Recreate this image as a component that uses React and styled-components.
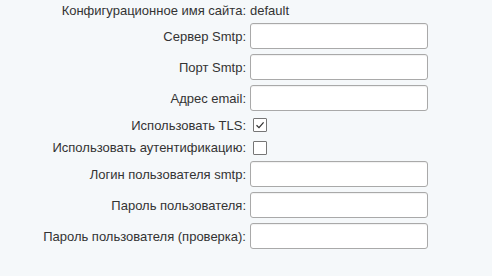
import styled, { createGlobalStyle } from "styled-components";

const GlobalStyle = createGlobalStyle`
    html, body {
        margin: 0;
        padding: 0;
        background: #f5f8fa;
    }
    body {
        font-family: "Liberation Sans", Arial, sans-serif;
        font-size: 13px;
        color: #333;
    }
`;

const Form = styled.div`
    width: 492px;
    height: 276px;
    padding-top: 2px;
    box-sizing: border-box;
    display: flex;
    flex-direction: column;
    gap: 5px;
`;

const Row = styled.div`
    display: grid;
    grid-template-columns: 246px auto;
    column-gap: 4px;
    align-items: center;
    height: ${(p) => p.$h}px;
`;

const Label = styled.label`
    text-align: right;
    white-space: nowrap;
`;

const Value = styled.span`
    color: #333;
`;

const Input = styled.input`
    box-sizing: border-box;
    width: 178px;
    height: 26px;
    margin: 0;
    border: 1px solid #a9a9a9;
    border-radius: 3px;
    background: #fff;
    box-shadow: inset 0 1px 1px rgba(0, 0, 0, 0.06);
    font: inherit;
    padding: 0 6px;
    outline: none;
`;

const Check = styled.span`
    box-sizing: border-box;
    display: inline-flex;
    align-items: center;
    justify-content: center;
    width: 14px;
    height: 14px;
    margin-left: 3px;
    border: 1px solid #767676;
    border-radius: 1px;
    background: #fff;
    svg {
        display: ${(p) => (p.$on ? "block" : "none")};
    }
`;

function CheckBox({ on }) {
    return (
        <Check $on={on}>
            <svg width="10" height="10" viewBox="0 0 10 10">
                <path d="M1.5 5.2 L4 7.6 L8.6 2.4" fill="none" stroke="#333" strokeWidth="1.3" />
            </svg>
        </Check>
    );
}

export default function App() {
    return (
        <>
            <GlobalStyle />
            <Form>
                <Row $h={16}>
                    <Label>Конфигурационное имя сайта:</Label>
                    <Value>default</Value>
                </Row>
                <Row $h={26}>
                    <Label>Сервер Smtp:</Label>
                    <Input />
                </Row>
                <Row $h={26}>
                    <Label>Порт Smtp:</Label>
                    <Input />
                </Row>
                <Row $h={26}>
                    <Label>Адрес email:</Label>
                    <Input />
                </Row>
                <Row $h={18}>
                    <Label>Использовать TLS:</Label>
                    <CheckBox on />
                </Row>
                <Row $h={17}>
                    <Label>Использовать аутентификацию:</Label>
                    <CheckBox />
                </Row>
                <Row $h={26}>
                    <Label>Логин пользователя smtp:</Label>
                    <Input />
                </Row>
                <Row $h={26}>
                    <Label>Пароль пользователя:</Label>
                    <Input type="password" />
                </Row>
                <Row $h={26}>
                    <Label>Пароль пользователя (проверка):</Label>
                    <Input type="password" />
                </Row>
            </Form>
        </>
    );
}
